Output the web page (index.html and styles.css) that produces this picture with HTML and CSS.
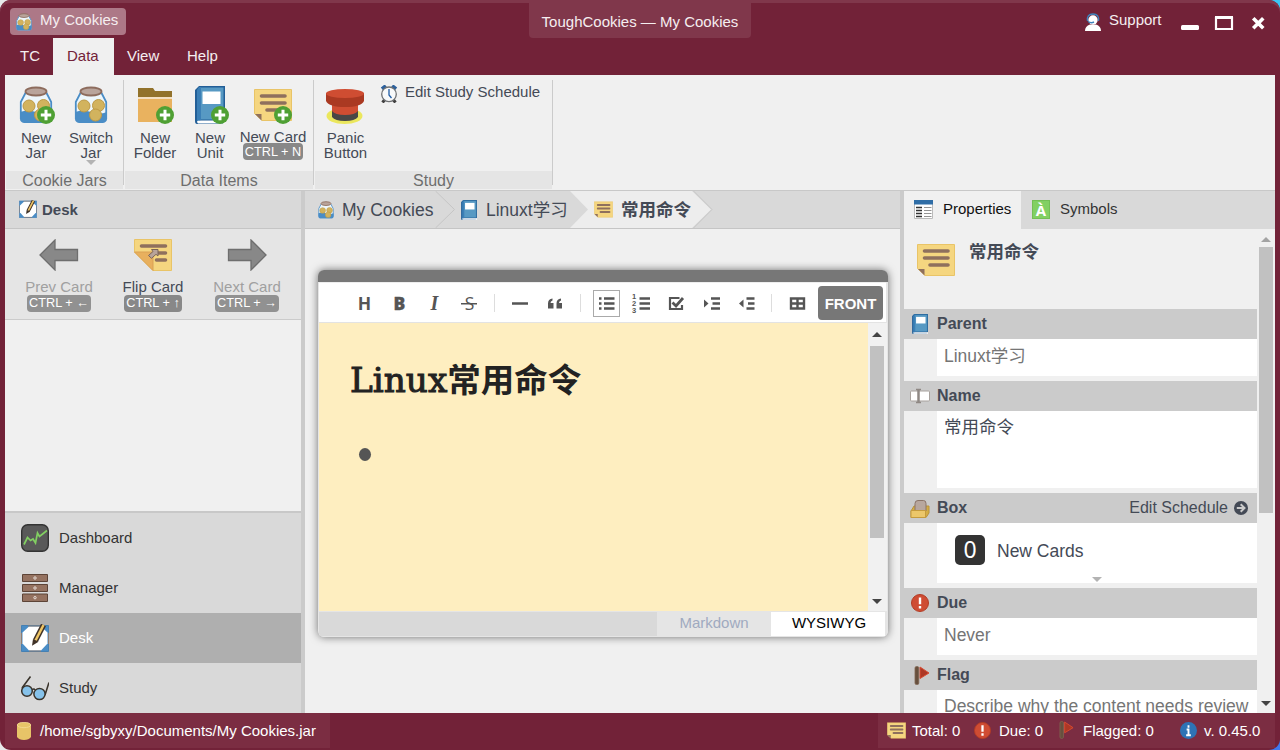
FILE: index.html
```html
<!DOCTYPE html>
<html lang="en">
<head>
<meta charset="utf-8">
<title>ToughCookies — My Cookies</title>
<link rel="stylesheet" href="styles.css">
</head>
<body>
<svg class="defs" width="0" height="0">
  <symbol id="jar" viewBox="0 0 34 38">
    <path d="M7 6 1.500 16v17q0 3 4 3.500h23q4-.5 4-3.500V16L27 6z" fill="#edf6fb"/>
    <path d="M1 26q8-3 16 0t16 0v7q0 3-4 4H5q-4-1-4-4z" fill="#4a8dc6"/>
    <path d="M7 6 1.800 16v17M27 6l5.200 10v17" fill="none" stroke="#4a8dc6" stroke-width="1.800"/>
    <g fill="#d2b35e" stroke="#bd9945"><circle cx="10" cy="20" r="6"/><circle cx="24.500" cy="19.500" r="6"/><circle cx="21.500" cy="29" r="6"/></g>
    <ellipse cx="17" cy="5.500" rx="10.500" ry="4" fill="#b9a49b" stroke="#8d6c5d" stroke-width="1.800"/>
  </symbol>
  <symbol id="book" viewBox="0 0 30 38">
    <path d="M0 4 4 0h26v34H4l-2 2h26v2H2q-2 0-2-3z" fill="#235f97"/>
    <path d="M2.500 34.500H30V37.500H3q-1.500-1-.5-3z" fill="#fff"/>
    <path d="M4 1h25v33H4z" fill="#5799c3" stroke="#235f97"/>
    <path d="M4 1h2v33l-4 1V4z" fill="#3b7fb6"/>
    <path d="M7.500 5.500h18V18h-18z" fill="#fff"/>
  </symbol>
  <symbol id="note" viewBox="0 0 38 32">
    <path d="M.5.5h37v31H8l-7.500-7z" fill="#f5d680" stroke="#e9c467"/>
    <path d="M1 25h6.500v6.500z" fill="#8f705d"/>
    <path d="M7.500 7h23.500M7.500 14h23.500M13 21h18" stroke="#8f705d" stroke-width="3.600" stroke-linecap="round"/>
  </symbol>
  <symbol id="desk" viewBox="0 0 28 28">
    <path d="M.5 1.500h27v26H.5z" fill="#4a8dc6" stroke="#4680b2"/>
    <path d="M8 2.500h12l6.500 6v11l-6.500 7H8l-6.500-7v-11z" fill="#fff"/>
    <path d="M7 2h14M27.500 9v11M20 27H8M.5 9v11" stroke="#8f7c70"/>
    <path d="M14.500 16.500 22.500 1" stroke="#403228" stroke-width="5.500"/>
    <path d="M14.500 16.500 22.500 1" stroke="#efc665" stroke-width="2.500"/>
    <path d="m12 15 5.500 2.800-6.500 4z" fill="#403228"/>
  </symbol>
  <symbol id="plus" viewBox="0 0 18 18"><circle cx="9" cy="9" r="9" fill="#4fa034"/><path d="M9 3.800v10.400M3.800 9h10.400" stroke="#fff" stroke-width="3"/></symbol>
  <symbol id="alert" viewBox="0 0 18 18"><circle cx="9" cy="9" r="8.500" fill="#cf4c33" stroke="#b23c25"/><path d="M9 3.500v6.800M9 12v2.500" stroke="#fff" stroke-width="2.400"/></symbol>
  <symbol id="flag" viewBox="0 0 16 19"><path d="M6 1 15 7 6 12.500z" fill="#ad3825" stroke="#d94b32"/><rect x="1" y=".5" width="3.800" height="18" rx="1.500" fill="#67503e" stroke="#806551" stroke-width=".8"/></symbol>
  <symbol id="arrow" viewBox="0 0 40 32"><path d="M1 16 16 1v9.500h22.500v11H16V31z" fill="#888" stroke="#6e6e6e" stroke-width="1.300"/></symbol>
</svg>

<div class="window">
  <header class="titlebar">
    <div class="jar-tab"><svg class="i18"><use href="#jar"/></svg><span>My Cookies</span></div>
    <div class="app-title">ToughCookies — My Cookies</div>
    <div class="win-tools">
      <svg class="support-icon" viewBox="0 0 16 18"><path d="M0 18q0-5 5-6.500h6q5 1.500 5 6.500z" fill="#fff"/><circle cx="8" cy="7" r="4.700" fill="#fff"/><path d="M2.500 8Q1.500 1 8 1t5.500 7" fill="none" stroke="#3d83bd" stroke-width="1.300"/><path d="M3 8.500q3 2 6 .5" fill="none" stroke="#3d83bd" stroke-width="1.500"/></svg>
      <span class="support">Support</span>
      <svg class="win-btns" viewBox="0 0 84 16"><rect x="0" y="10" width="18" height="5" rx="1.500" fill="#fff"/><path d="M35 3h16v11H35zM34 2h18" fill="none" stroke="#fff" stroke-width="2.200"/><path d="m73.500 4.500 7.500 7.500m0-7.500-7.500 7.500" stroke="#fff" stroke-width="3.600" stroke-linecap="square"/></svg>
    </div>
  </header>
  <nav class="menubar"><a>TC</a><a class="active">Data</a><a>View</a><a>Help</a></nav>

  <section class="ribbon">
    <div class="group g-jars">
      <div class="tools">
        <div class="tool"><div class="pic"><svg class="w34"><use href="#jar"/></svg><svg class="badge"><use href="#plus"/></svg></div><span>New<br>Jar</span></div>
        <div class="tool"><div class="pic"><svg class="w34"><use href="#jar"/></svg></div><span>Switch<br>Jar</span><i class="drop"></i></div>
      </div>
      <div class="caption">Cookie Jars</div>
    </div>
    <div class="group g-items">
      <div class="tools">
        <div class="tool"><div class="pic"><svg class="folder" viewBox="0 0 34 34"><path d="M0 0h15l2 3h17v8H0z" fill="#92722b"/><path d="M0 9h34v3H0z" fill="#f3dfc2"/><path d="M0 11h34v23H0z" fill="#e9b25f"/></svg><svg class="badge"><use href="#plus"/></svg></div><span>New<br>Folder</span></div>
        <div class="tool"><div class="pic"><svg class="w30"><use href="#book"/></svg><svg class="badge"><use href="#plus"/></svg></div><span>New<br>Unit</span></div>
        <div class="tool wide"><div class="pic"><svg class="note38"><use href="#note"/></svg><svg class="badge"><use href="#plus"/></svg></div><span class="single">New Card</span><kbd>CTRL + N</kbd></div>
      </div>
      <div class="caption">Data Items</div>
    </div>
    <div class="group g-study">
      <div class="tools">
        <div class="tool panic"><div class="pic"><svg class="w38" viewBox="0 0 38 38"><ellipse cx="18.500" cy="30" rx="18" ry="8" fill="#ebe75d"/><path d="M6 24v7q3 4 13 4t13-4v-7z" fill="#484746"/><path d="M6 13v12q3 4 13 4t13-4V13z" fill="#cf4d32"/><path d="M0 7v8q3 6 19 6t19-6V7z" fill="#aa3922"/><ellipse cx="19" cy="7.500" rx="19" ry="4.500" fill="#cf4d32"/></svg></div><span>Panic<br>Button</span></div>
        <div class="sched"><svg class="clock" viewBox="0 0 18 18"><path d="m2 4 4-3M16 4l-4-3" stroke="#2c609c" stroke-width="4"/><path d="m4.500 15-2 2.500M13.500 15l2 2.500" stroke="#404040" stroke-width="3"/><circle cx="9" cy="9.300" r="7.300" fill="#f8f9fa" stroke="#6e7072" stroke-width="1.300"/><path d="M9 4v6l2.500 3" fill="none" stroke="#1f5ca5" stroke-width="1.300"/></svg><span>Edit Study Schedule</span></div>
      </div>
      <div class="caption">Study</div>
    </div>
  </section>

  <main class="main">
    <aside class="left">
      <div class="left-head"><svg class="i18"><use href="#desk"/></svg><b>Desk</b></div>
      <div class="cards-bar">
        <div class="card-tool off"><svg class="arrow"><use href="#arrow"/></svg><span>Prev Card</span><kbd>CTRL + ←</kbd></div>
        <div class="card-tool"><svg class="arrow flip" viewBox="0 0 38 32"><path d="M.5.5h37v31H19L.5 13z" fill="#f5d680" stroke="#e9c467"/><path d="M.5 13H19v18.500z" fill="#e8b05e" stroke="#daa155"/><path d="M7.500 7h24M24 14h7.500M22.500 21h9" stroke="#8f705d" stroke-width="3.600" stroke-linecap="round"/><path d="m14.500 16.500 4.500-4-1.500-2h6.500v6.500l-2-1.700-4.500 4z" fill="#b8a399" stroke="#7b6558"/></svg><span>Flip Card</span><kbd>CTRL + ↑</kbd></div>
        <div class="card-tool off"><svg class="arrow next"><use href="#arrow"/></svg><span>Next Card</span><kbd>CTRL + →</kbd></div>
      </div>
      <div class="blank"></div>
      <nav class="side-nav">
        <a><svg class="i28" viewBox="0 0 28 28"><rect x=".7" y=".7" width="26.600" height="26.600" rx="6" fill="#595959" stroke="#333" stroke-width="1.400"/><path d="m3 20.500 3.500-7 3 3 2.500-1.500 2.500 4 2-10 2 3.500 7.500-6" fill="none" stroke="#82d062" stroke-width="1.700"/></svg>Dashboard</a>
        <a><svg class="i28" viewBox="0 0 28 28"><g fill="#957260" stroke="#5d4437"><path d="M1.500.5h25v7h-25zM1.500 10.500h25v7h-25zM1.500 20h25v7.500h-25z"/></g><g fill="#8d7060" stroke="#eadfd9"><circle cx="14" cy="4" r="1.200"/><circle cx="14" cy="14" r="1.200"/><circle cx="14" cy="23.700" r="1.200"/></g></svg>Manager</a>
        <a class="active"><svg class="i28"><use href="#desk"/></svg>Desk</a>
        <a><svg class="i28" viewBox="0 0 28 28"><path d="m1 14 8.500-11.500M28 8.500 24 21M11 16q2-2 3 0" fill="none" stroke="#3a342c" stroke-width="1.600"/><circle cx="6" cy="17" r="5.300" fill="#86c2ea" stroke="#3a342c" stroke-width="1.500"/><circle cx="18.500" cy="20" r="5.600" fill="#86c2ea" stroke="#3a342c" stroke-width="1.500"/></svg>Study</a>
      </nav>
    </aside>

    <section class="center">
      <div class="crumbs">
        <div class="crumb c1"><svg class="i18"><use href="#jar"/></svg><span>My Cookies</span></div>
        <div class="crumb c2"><svg class="i20"><use href="#book"/></svg><span>Linuxt学习</span></div>
        <div class="crumb c3"><svg class="note19"><use href="#note"/></svg><b>常用命令</b></div>
        <svg class="crumb-lines" viewBox="0 0 595 37"><g fill="none" stroke="#c5c5c5"><path d="m130.500 0 19 18.500-19 18.500M388.500 0l18.500 18.500L388.500 37"/></g></svg>
      </div>
      <div class="stage">
        <div class="editor">
          <div class="grip"></div>
          <div class="toolbar">
            <button class="tb h">H</button><button class="tb b">B</button><button class="tb i">I</button><button class="tb s">S</button><i class="sep"></i>
            <button class="tb"><svg viewBox="0 0 27 27"><path d="M5 13.500h16" stroke="#555" stroke-width="2.500"/></svg></button>
            <button class="tb"><svg viewBox="0 0 27 27"><g fill="#555"><path d="M6 18.500v-5q0-4.500 4.500-5v2q-2 .5-2 2.500h3v5.500zM14.500 18.500v-5q0-4.500 4.500-5v2q-2 .5-2 2.500h3v5.500z"/></g></svg></button><i class="sep"></i>
            <button class="tb boxed"><svg viewBox="0 0 27 27"><path d="M6 8.500h2.500M6 13.500h2.500M6 18.500h2.500M11 8.500h10.500M11 13.500h10.500M11 18.500h10.500" stroke="#555" stroke-width="2.300"/></svg></button>
            <button class="tb nums"><span><i>1</i><i>2</i><i>3</i></span><svg viewBox="0 0 27 27"><path d="M11.500 8.500H22M11.500 13.500H22M11.500 18.500H22" stroke="#555" stroke-width="2.300"/></svg></button>
            <button class="tb"><svg viewBox="0 0 27 27"><path d="M16.500 8H7v11h12v-4" fill="none" stroke="#555" stroke-width="2.200"/><path d="m9.500 12.500 3.500 3.500 7-8" fill="none" stroke="#555" stroke-width="2.800"/></svg></button>
            <button class="tb"><svg viewBox="0 0 27 27"><path d="m6 9.500 4.500 4-4.500 4z" fill="#555"/><path d="M13 8.500h9M14.500 13.500H22M13 18.500h9" stroke="#555" stroke-width="2.300"/></svg></button>
            <button class="tb"><svg viewBox="0 0 27 27"><path d="m10.500 9.500-4.500 4 4.500 4z" fill="#555"/><path d="M13.500 8.500h8M15 13.500h6.500M13.500 18.500h8" stroke="#555" stroke-width="2.300"/></svg></button><i class="sep"></i>
            <button class="tb"><svg viewBox="0 0 27 27"><path d="M7 8.500h13v10H7zM13.500 8.500v10M7 13.500h13" fill="none" stroke="#555" stroke-width="2.400"/></svg></button>
            <button class="front">FRONT</button>
          </div>
          <div class="doc">
            <div class="page"><h1><span>Linux</span>常用命令</h1><div class="bullet"></div></div>
            <div class="scroll"><i class="up"></i><div class="thumb"></div><i class="down"></i></div>
          </div>
          <div class="modes"><span class="md">Markdown</span><span class="wy">WYSIWYG</span></div>
        </div>
      </div>
    </section>

    <aside class="right">
      <div class="tabs">
        <div class="tab on"><svg class="i19" viewBox="0 0 19 19"><path d="M.5.5h18v18H.5z" fill="#fff" stroke="#bbb"/><path d="M0 0h19v4.500H0z" fill="#2f6da6"/><path d="M2 7.500h6M2 10.500h6M2 13.500h6M2 16.500h6" stroke="#333" stroke-width="1.600"/><path d="M10 7.500h7.500M10 10.500h7.500M10 13.500h7.500M10 16.500h7.500" stroke="#888" stroke-width=".9"/></svg>Properties</div>
        <div class="tab sym"><span class="a-icon">À</span>Symbols</div>
      </div>
      <div class="props">
        <div class="prop-list">
          <div class="prop-top"><svg class="note38"><use href="#note"/></svg><b>常用命令</b></div>
          <div class="ph"><svg class="i20"><use href="#book"/></svg><b>Parent</b></div>
          <div class="pv dim">Linuxt学习</div>
          <div class="ph"><svg class="i20" viewBox="0 0 20 20"><rect x=".5" y="5" width="19" height="10" rx="1" fill="#fff" stroke="#a8a29e"/><path d="M8.500 3.500v13" stroke="#8f8884" stroke-width="2.500"/><path d="M6 3.500h5M6 16.500h5" stroke="#8f8884" stroke-width="1.500"/></svg><b>Name</b></div>
          <div class="pv name">常用命令</div>
          <div class="ph"><svg class="i20 box-icon" viewBox="0 0 20 20"><path d="M1 12 4 7h15v7l-3 4.500H1z" fill="#d4ad45" stroke="#b9923a"/><path d="M5 12V4.500q0-3 3-3h5.500q2.500 0 2.500 3V12z" fill="#b8a79e" stroke="#8b7468"/><path d="M1 11.500h14.500v7H1z" fill="#ecc76a" stroke="#c59b3e"/></svg><b>Box</b><span class="edit">Edit Schedule</span><svg class="go" viewBox="0 0 14 14"><circle cx="7" cy="7" r="7" fill="#444a56"/><path d="M2.800 7h7M6.700 3.200 10.500 7l-3.800 3.800" fill="none" stroke="#cbcbcb" stroke-width="2"/></svg></div>
          <div class="pv box"><span class="zero">0</span>New Cards<i class="drop"></i></div>
          <div class="ph"><svg class="i18a"><use href="#alert"/></svg><b>Due</b></div>
          <div class="pv dim">Never</div>
          <div class="ph"><svg class="i20f"><use href="#flag"/></svg><b>Flag</b></div>
          <div class="pv dim last">Describe why the content needs review</div>
        </div>
        <div class="scroll"><i class="up"></i><div class="thumb"></div><i class="down"></i></div>
      </div>
    </aside>
  </main>

  <footer class="status">
    <div class="path"><svg class="db" viewBox="0 0 14 18"><path d="M0 3v12q2 3 7 3t7-3V3z" fill="#e7c468"/><ellipse cx="7" cy="3" rx="6.700" ry="2.700" fill="#e7c468" stroke="#f5dc97" stroke-width=".8"/></svg>/home/sgbyxy/Documents/My Cookies.jar</div>
    <div class="stats">
      <svg class="note19"><use href="#note"/></svg><span class="s1">Total: 0</span>
      <svg class="st17"><use href="#alert"/></svg><span class="s2">Due: 0</span>
      <svg class="st-flag"><use href="#flag"/></svg><span class="s3">Flagged: 0</span>
      <svg class="st17" viewBox="0 0 18 18"><circle cx="9" cy="9" r="9" fill="#2e73b5"/><path d="M9 3.500v2.500M7 8h2v5.500M6.500 14h5" fill="none" stroke="#fff" stroke-width="2"/></svg><span class="s4">v. 0.45.0</span>
    </div>
  </footer>
</div>
</body>
</html>
```

FILE: styles.css
```css
* { box-sizing: border-box; }
body {
  margin: 0;
  width: 1280px;
  height: 750px;
  overflow: hidden;
  background: linear-gradient(90deg, #e8eaea 50%, transparent 50%), linear-gradient(#3bc5f3 50%, #3f78ee 50%);
  font: 15px/20px "Liberation Sans", "Noto Sans CJK SC", sans-serif;
  color: #444a56;
}
svg { display: block; flex: none; }
.defs { position: absolute; }
.i18 { width: 18px; height: 18px; }
.i19 { width: 19px; height: 19px; }
.i20 { width: 20px; height: 20px; }
.i28 { width: 28px; height: 28px; }
.note19 { width: 19px; height: 17px; }
.note38 { width: 38px; height: 32px; }
kbd {
  font: 12.700px/17px "Liberation Sans", sans-serif;
  background: #888;
  color: #fff;
  border-radius: 4px;
  height: 17px;
  padding: 0 2px;
  white-space: nowrap;
}

.window {
  width: 1280px;
  height: 750px;
  padding: 0 5px;
  display: flex;
  flex-direction: column;
  background: #722238;
  border-radius: 11px;
  overflow: hidden;
  box-shadow: inset 0 3px #80374b;
}
.titlebar {
  height: 38px;
  display: grid;
  grid-template-columns: 1fr 222px 1fr;
  align-items: start;
  color: #f5eef0;
}
.jar-tab {
  justify-self: start;
  display: flex;
  align-items: center;
  gap: 7px;
  width: 116px;
  height: 27px;
  margin: 8px 0 0 5px;
  padding: 0 0 3px 5px;
  border-radius: 4px;
  background: #ad7887;
}
.jar-tab svg { margin-top: 3px; }
.app-title {
  margin-top: 3px;
  height: 35px;
  line-height: 38px;
  text-align: center;
  white-space: nowrap;
  background: #80374b;
  border-radius: 0 0 4px 4px;
}
.win-tools { display: flex; justify-self: end; padding-right: 10px; }
.support-icon { width: 16px; height: 18px; margin: 13px 8px 0 0; }
.support { width: 72px; margin-top: 10px; }
.win-btns { width: 84px; height: 16px; margin-top: 15px; }
.menubar { display: flex; height: 37px; color: #f5eef0; }
.menubar a { padding: 0 14px; line-height: 36px; }
.menubar a:first-child { width: 48px; padding-left: 15px; }
.menubar a.active { background: #f0f0f0; color: #722238; width: 61px; padding-right: 0; }
.menubar a:nth-child(3) { width: 59px; padding-right: 0; padding-left: 13px; }

.ribbon {
  display: flex;
  height: 116px;
  padding: 5px 1px 0;
  gap: 1px;
  background: #f0f0f0;
  border-bottom: 1px solid #c8c8c8;
}
.group {
  height: 109px;
  display: flex;
  flex-direction: column;
  justify-content: space-between;
  background: linear-gradient(#cbcbcb, #cbcbcb) right top / 1px 105px no-repeat;
  padding-right: 1px;
}
.g-jars { width: 118px; }
.g-items { width: 189px; }
.g-study { width: 238px; }
.tools { display: flex; padding: 6px 2px 0; }
.g-study .tools { padding-left: 0; }
.tool { position: relative; width: 55px; display: flex; flex-direction: column; align-items: center; text-align: center; line-height: 15px; }
.tool.wide { width: 71px; }
.tool.panic { width: 60px; }
.pic { position: relative; width: 38px; height: 38px; display: flex; justify-content: center; align-items: center; }
.w34 { width: 34px; height: 38px; }
.w30 { width: 30px; height: 38px; }
.w38 { width: 38px; height: 38px; }
.folder { width: 34px; height: 34px; }
.badge { position: absolute; left: 20px; top: 20px; width: 18px; height: 18px; }
.tool span { margin: 6px 0 0 1px; }
.tool span.single { margin: 5px 0 -1px 1px; white-space: nowrap; }
.tool kbd { line-height: 18px; margin-left: 1px; }
.drop { position: absolute; left: 50%; margin-left: -5px; bottom: -5px; border: 5px solid transparent; border-top-color: #b3b3b3; border-bottom: 0; }
.sched { display: flex; gap: 7px; margin-left: 5px; height: 20px; }
.sched span { margin-top: -4px; }
.clock { width: 18px; height: 18px; margin-top: -1px; }
.caption { height: 18px; line-height: 20px; font-size: 16px; text-align: center; background: #e5e5e5; color: #6e6e6e; }

.main { display: flex; height: 522px; }
.left { width: 300px; border-right: 4px solid #cbcbcb; display: flex; flex-direction: column; background: #f0f0f0; }
.left-head { height: 38px; display: flex; align-items: center; gap: 5px; padding-left: 14px; background: #d9d9d9; border-bottom: 1px solid #c5c5c5; }
.left-head svg { margin-bottom: 1px; }
.cards-bar { height: 91px; display: flex; background: #e5e5e5; border-bottom: 1px solid #cbcbcb; padding: 10px 0 0 7px; }
.card-tool { width: 94px; display: flex; flex-direction: column; align-items: center; }
.card-tool span { margin: 6px 0 -2px; white-space: nowrap; }
.off { color: #a0a0a0; }
.off kbd { background: #919191; }
.arrow { width: 40px; height: 32px; }
.arrow.flip { width: 38px; }
.arrow.next { transform: scaleX(-1); }
.blank { flex: 1; border-bottom: 2px solid #c8c8c8; }
.side-nav a { display: flex; align-items: center; gap: 10px; height: 50px; padding-left: 16px; background: #d9d9d9; color: #333; }
.side-nav a.active { background: #afafaf; color: #fff; }

.center { width: 599px; border-right: 4px solid #cbcbcb; background: #f0f0f0; }
.crumbs { position: relative; display: flex; height: 38px; background: #d9d9d9; border-bottom: 1px solid #c5c5c5; font-size: 17.500px; }
.crumb { display: flex; align-items: center; }
.crumb span, .crumb b { padding-top: 1px; white-space: nowrap; }
.c1 { width: 131px; padding-left: 12px; gap: 7px; }
.c2 { width: 134px; padding-left: 23px; gap: 7px; }
.c3 { width: 141px; padding-left: 24px; gap: 8px; background: #ededed; clip-path: polygon(0 0, 122px 0, 100% 50%, 122px 100%, 0 100%, 18px 50%); }
.crumb-lines { position: absolute; left: 0; top: 0; width: 595px; height: 37px; }
.stage { padding: 41px 12px 0 13px; }
.editor {
  height: 367px;
  display: flex;
  flex-direction: column;
  border-radius: 6px;
  overflow: hidden;
  background: #e6e6e6;
  box-shadow: 0 0 8px rgba(0,0,0,.55);
}
.grip { height: 12px; background: #777; }
.toolbar { display: flex; align-items: center; gap: 8px; height: 41px; margin: 0 2px 0 1px; padding: 1px 0 0 32px; background: #fff; border-top: 1px solid #eee; border-bottom: 1px solid #e3e3e3; }
.tb { position: relative; flex: none; width: 27px; height: 27px; padding: 0; border: 0; background: none; color: #555; font: bold 17.500px/27px "Open Sans", sans-serif; }
.tb svg { width: 27px; height: 27px; }
.tb.b { font-weight: 800; -webkit-text-stroke: .3px #555; }
.tb.i { font: italic bold 20px/27px "Liberation Serif", serif; }
.tb.s { font-weight: 400; background: linear-gradient(#555, #555) 5px 13px / 16px 1.500px no-repeat; }
.tb.boxed { box-shadow: inset 0 0 0 1px #aaa; }
.nums span { position: absolute; left: 4px; top: 3px; display: flex; flex-direction: column; }
.nums i { height: 7px; font: bold 7.500px/7px "Liberation Sans", sans-serif; }
.sep { flex: none; width: 8px; height: 18px; background: linear-gradient(#ddd, #ddd) 3px 0 / 1px 18px no-repeat; }
.front { flex: none; width: 65px; height: 34px; margin-left: -1px; padding: 0; border: 0; border-radius: 4px; background: #777; color: #fff; font: bold 15px/35px "Liberation Sans", sans-serif; }
.doc { display: flex; height: 288px; margin: 0 1px; }
.page { flex: 1; background: #feeec0; padding: 31px 0 0 31px; }
h1 { margin: 0; height: 48px; font: bold 33.500px/48px "Noto Sans CJK SC", sans-serif; color: #222; white-space: nowrap; }
h1 span { font: 34.300px/48px "DejaVu Serif", serif; -webkit-text-stroke: 1px #222; }
.bullet { width: 12px; height: 13px; border-radius: 50%; background: #555; margin: 46px 0 0 9px; }
.scroll { width: 19px; display: flex; flex-direction: column; align-items: center; background: #f1f1f1; padding: 9px 2px 7px 0; }
.scroll i { border: 5px solid transparent; }
.scroll .up { border-top: 0; border-bottom-color: #444; margin-bottom: 9px; }
.scroll .down { border-bottom: 0; border-top-color: #444; margin-top: auto; }
.thumb { width: 14px; height: 192px; background: #c1c1c1; }
.modes { display: flex; justify-content: flex-end; height: 26px; margin-left: 1px; padding: 1px 3px 1px 0; background: linear-gradient(#d9d9d9, #d9d9d9) 0 1px / 338px 24px no-repeat #e5e5e5; line-height: 22px; text-align: center; }
.md { width: 115px; color: #a0aac0; padding-left: 1px; }
.wy { width: 114px; background: #fff; color: #000; padding-left: 2px; }

.right { width: 371px; background: #f0f0f0; }
.tabs { display: flex; height: 38px; background: #d9d9d9; color: #333; }
.tab { display: flex; align-items: center; gap: 10px; padding: 0 0 2px 10px; }
.tab.on { width: 117px; background: #f0f0f0; color: #111; }
.sym { padding-left: 11px; }
.a-icon { width: 18px; height: 19px; background: #82d062; border: 1px solid #73bf54; color: #fff; font: bold 15px/18px "Open Sans", sans-serif; text-align: center; }
.props { display: flex; height: 484px; overflow: hidden; }
.prop-list { width: 353px; height: 484px; overflow: hidden; }
.prop-top { display: flex; gap: 14px; height: 80px; padding: 15px 0 0 13px; font-size: 17.500px; }
.prop-top b { margin-top: -2px; }
.ph { display: flex; align-items: center; height: 30px; padding-left: 6px; background: #cbcbcb; font-size: 16px; }
.ph b { margin-left: 7px; padding-bottom: 1px; }
.box-icon { margin-top: 2px; }
.i18a { width: 18px; height: 18px; margin: 0 1px; }
.i20f { width: 16px; height: 19px; margin: 0 0 0 4px; }
.edit { margin-left: auto; }
.go { width: 14px; height: 14px; margin: 0 9px 0 6px; }
.pv { position: relative; height: 37px; margin: 0 0 5px 33px; padding-left: 7px; background: #fff; font-size: 17.500px; line-height: 34px; white-space: nowrap; }
.dim { color: #757575; }
.last { line-height: 32px; }
.name { height: 77px; line-height: 32px; }
.box { height: 60px; line-height: 56px; display: flex; padding-left: 18px; gap: 12px; }
.box .drop { bottom: 1px; }
.zero { width: 30px; height: 30px; margin-top: 12px; border-radius: 5px; background: #333; color: #fff; font: 23px/28px "Noto Sans", sans-serif; text-align: center; }
.props .scroll { width: 18px; padding: 8px 0 7px 0; align-items: center; background: #f0f0f0; }
.props .up { border-bottom-color: #a3a3a3; margin-bottom: 5px; }
.props .thumb { height: 266px; }

.status { display: flex; justify-content: space-between; height: 35px; color: #fff; line-height: 35px; }
.path { display: flex; align-items: center; width: 325px; gap: 9px; padding: 0 0 1px 12px; background: #7b2d42; white-space: nowrap; }
.db { width: 14px; height: 18px; margin-top: 2px; }
.stats { display: flex; align-items: center; width: 397px; padding: 0 0 1px 9px; background: #7b2d42; }
.stats span { white-space: nowrap; }
.s1 { margin-left: 6px; width: 62px; }
.s2 { margin-left: 8px; width: 60px; }
.s3 { margin-left: 9px; width: 97px; }
.s4 { margin-left: 7px; }
.st17 { width: 17px; height: 17px; }
.st-flag { width: 15px; height: 18px; }
```
